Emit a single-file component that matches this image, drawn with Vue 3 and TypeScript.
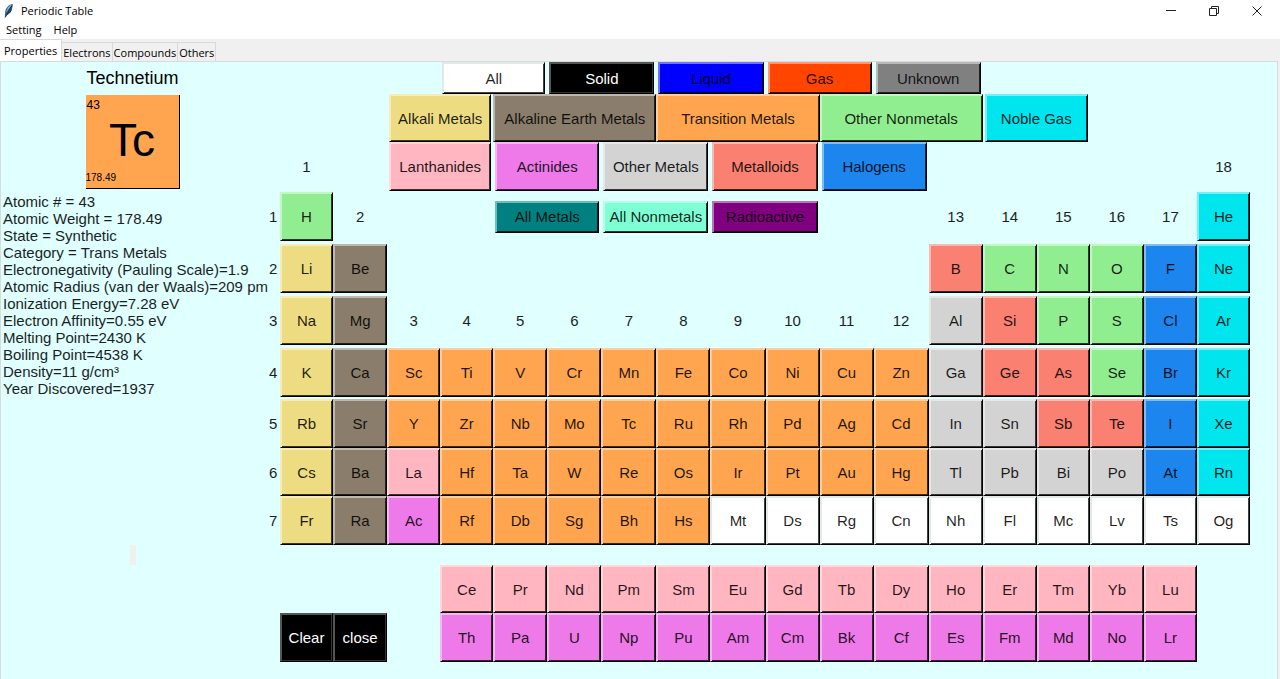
<script setup lang="ts">
import { ref } from 'vue'

interface Cell {
  text: string
  kind: string
  row: number
  col: number
  span: number
}

interface Label {
  text: string
  row: number
  col: number
}

const tabs = ['Properties', 'Electrons', 'Compounds', 'Others']
const activeTab = ref('Properties')

const facts = [
  'Atomic # = 43',
  'Atomic Weight = 178.49',
  'State = Synthetic',
  'Category = Trans Metals',
  'Electronegativity (Pauling Scale)=1.9',
  'Atomic Radius (van der Waals)=209 pm',
  'Ionization Energy=7.28 eV',
  'Electron Affinity=0.55 eV',
  'Melting Point=2430 K',
  'Boiling Point=4538 K',
  'Density=11 g/cm³',
  'Year Discovered=1937',
]

const filter = (text: string, kind: string, row: number, col: number, span = 2): Cell => ({
  text,
  kind,
  row,
  col,
  span,
})

const filters: Cell[] = [
  filter('All', 'white', 1, 4),
  filter('Solid', 'black', 1, 6),
  filter('Liquid', 'liquid', 1, 8),
  filter('Gas', 'gas', 1, 10),
  filter('Unknown', 'unknown', 1, 12),
  filter('Alkali Metals', 'alkali', 2, 3),
  filter('Alkaline Earth Metals', 'earth', 2, 5, 3),
  filter('Transition Metals', 'trans', 2, 8, 3),
  filter('Other Nonmetals', 'nonmetal', 2, 11, 3),
  filter('Noble Gas', 'noble', 2, 14),
  filter('Lanthanides', 'lanth', 3, 3),
  filter('Actinides', 'act', 3, 5),
  filter('Other Metals', 'metal', 3, 7),
  filter('Metalloids', 'metalloid', 3, 9),
  filter('Halogens', 'halogen', 3, 11),
  filter('All Metals', 'teal', 4, 5),
  filter('All Nonmetals', 'aqua', 4, 7),
  filter('Radioactive', 'purple', 4, 9),
]

// Each run: grid row, first column, category, symbols from left to right.
const runs: [number, number, string, string][] = [
  [4, 1, 'nonmetal', 'H'],
  [4, 18, 'noble', 'He'],
  [5, 1, 'alkali', 'Li'],
  [5, 2, 'earth', 'Be'],
  [5, 13, 'metalloid', 'B'],
  [5, 14, 'nonmetal', 'C N O'],
  [5, 17, 'halogen', 'F'],
  [5, 18, 'noble', 'Ne'],
  [6, 1, 'alkali', 'Na'],
  [6, 2, 'earth', 'Mg'],
  [6, 13, 'metal', 'Al'],
  [6, 14, 'metalloid', 'Si'],
  [6, 15, 'nonmetal', 'P S'],
  [6, 17, 'halogen', 'Cl'],
  [6, 18, 'noble', 'Ar'],
  [7, 1, 'alkali', 'K'],
  [7, 2, 'earth', 'Ca'],
  [7, 3, 'trans', 'Sc Ti V Cr Mn Fe Co Ni Cu Zn'],
  [7, 13, 'metal', 'Ga'],
  [7, 14, 'metalloid', 'Ge As'],
  [7, 16, 'nonmetal', 'Se'],
  [7, 17, 'halogen', 'Br'],
  [7, 18, 'noble', 'Kr'],
  [8, 1, 'alkali', 'Rb'],
  [8, 2, 'earth', 'Sr'],
  [8, 3, 'trans', 'Y Zr Nb Mo Tc Ru Rh Pd Ag Cd'],
  [8, 13, 'metal', 'In Sn'],
  [8, 15, 'metalloid', 'Sb Te'],
  [8, 17, 'halogen', 'I'],
  [8, 18, 'noble', 'Xe'],
  [9, 1, 'alkali', 'Cs'],
  [9, 2, 'earth', 'Ba'],
  [9, 3, 'lanth', 'La'],
  [9, 4, 'trans', 'Hf Ta W Re Os Ir Pt Au Hg'],
  [9, 13, 'metal', 'Tl Pb Bi Po'],
  [9, 17, 'halogen', 'At'],
  [9, 18, 'noble', 'Rn'],
  [10, 1, 'alkali', 'Fr'],
  [10, 2, 'earth', 'Ra'],
  [10, 3, 'act', 'Ac'],
  [10, 4, 'trans', 'Rf Db Sg Bh Hs'],
  [10, 9, 'white', 'Mt Ds Rg Cn Nh Fl Mc Lv Ts Og'],
  [12, 4, 'lanth', 'Ce Pr Nd Pm Sm Eu Gd Tb Dy Ho Er Tm Yb Lu'],
  [13, 1, 'black', 'Clear close'],
  [13, 4, 'act', 'Th Pa U Np Pu Am Cm Bk Cf Es Fm Md No Lr'],
]

const cells: Cell[] = runs.flatMap(([row, first, kind, symbols]) =>
  symbols.split(' ').map((text, i) => ({ text, kind, row, col: first + i, span: 1 })),
)

const groupRow = (n: number): number => {
  if (n === 1 || n === 18) return 3
  return n === 2 || n > 12 ? 4 : 6
}

const groups: Label[] = Array.from({ length: 18 }, (_, i) => ({
  text: String(i + 1),
  row: groupRow(i + 1),
  col: i + 1,
}))

const periods = [1, 2, 3, 4, 5, 6, 7]

// The first grid column holds the period numbers, so groups start at line 2.
const place = (c: { row: number; col: number; span?: number }) => ({
  gridRow: c.row,
  gridColumn: `${c.col + 1} / span ${c.span ?? 1}`,
})
</script>

<template>
  <div class="window">
    <header class="titlebar">
      <svg class="feather" viewBox="0 0 12 16" aria-hidden="true">
        <path d="M9.800 1C6 1.200 2.400 5 2.200 9.600L1.800 14.800L3.200 12.400C7 11.600 9.800 6.600 9.800 1Z" fill="#2d5d86" />
        <path d="M9.400 1.200C6.400 2 3.800 5.500 3 9.800L5.400 6.600Z" fill="#8fb9d8" />
        <path d="M8.800 2.600L2.200 14.500M6.500 10L8.600 6.500" stroke="#14283a" stroke-width="0.9" fill="none" />
      </svg>
      <span class="caption">Periodic Table</span>
      <div class="controls">
        <button type="button" aria-label="Minimize">
          <svg viewBox="0 0 12 12"><path d="M1 5.500H11" /></svg>
        </button>
        <button type="button" aria-label="Restore">
          <svg viewBox="0 0 12 12"><path d="M1.500 3.500H8.500V10.500H1.500ZM3.500 3.500V1.500H10.500V8.500H8.500" /></svg>
        </button>
        <button type="button" aria-label="Close">
          <svg viewBox="0 0 12 12"><path d="M1.500 1.500L10.500 10.500M10.500 1.500L1.500 10.500" /></svg>
        </button>
      </div>
    </header>

    <nav class="menubar">
      <button type="button">Setting</button>
      <button type="button">Help</button>
    </nav>

    <div class="tabs" role="tablist">
      <button
        v-for="tab in tabs"
        :key="tab"
        type="button"
        role="tab"
        class="tab"
        :class="{ active: tab === activeTab }"
        :aria-selected="tab === activeTab"
        @click="activeTab = tab"
      >
        {{ tab }}
      </button>
    </div>

    <main class="panel">
      <aside class="details">
        <h1>Technetium</h1>
        <div class="card">
          <span class="number">43</span>
          <span class="symbol">Tc</span>
          <span class="weight">178.49</span>
        </div>
        <ul class="facts">
          <li v-for="fact in facts" :key="fact">{{ fact }}</li>
        </ul>
        <div class="marker"></div>
      </aside>

      <section class="table">
        <span v-for="p in periods" :key="'p' + p" class="period" :style="{ gridRow: p + 3 }">{{ p }}</span>
        <span v-for="g in groups" :key="'g' + g.text" class="group" :style="place(g)">{{ g.text }}</span>
        <button
          v-for="f in filters"
          :key="f.text"
          type="button"
          class="key wide"
          :class="[f.kind, { short: f.row === 4, triple: f.span === 3 }]"
          :style="place(f)"
        >
          {{ f.text }}
        </button>
        <button
          v-for="c in cells"
          :key="c.text"
          type="button"
          class="key"
          :class="c.kind"
          :style="place(c)"
        >
          {{ c.text }}
        </button>
      </section>
    </main>
  </div>
</template>

<style>
body {
  margin: 0;
  background: #f0f0f0;
}
</style>

<style scoped>
.window {
  display: flex;
  flex-direction: column;
  min-height: 100vh;
  background: #f0f0f0;
  color: #000;
  font-family: "Open Sans", "Noto Sans", sans-serif;
  font-size: 11px;
}

button {
  box-sizing: border-box;
  margin: 0;
  padding: 0;
  border: 0;
  background: none;
  color: inherit;
  font: inherit;
}

.titlebar {
  display: flex;
  align-items: center;
  height: 21px;
  padding-left: 3px;
  background: #fff;
}

.feather {
  width: 12px;
  height: 16px;
}

.caption {
  margin-left: 6px;
}

.controls {
  display: flex;
  margin-left: auto;
  padding-right: 2px;
}

.controls button {
  display: grid;
  place-items: center;
  width: 43px;
  height: 20px;
}

.controls svg {
  width: 12px;
  height: 12px;
  fill: none;
  stroke: #222;
}

.menubar {
  display: flex;
  gap: 12px;
  height: 18px;
  padding-left: 6px;
  background: #fff;
  line-height: 18px;
}

.tabs {
  display: flex;
  align-items: flex-end;
  height: 22px;
}

.tab {
  height: 19px;
  padding: 2px 1px 0;
  border: 1px solid #d9d9d9;
  border-width: 1px 1px 0 0;
  line-height: 16px;
}

.tab.active {
  height: 22px;
  padding: 0 4px;
  background: #fff;
}

.panel {
  display: flex;
  flex: 1;
  margin-right: 2px;
  padding-bottom: 16px;
  border: 1px solid #d5dcdc;
  border-bottom: 0;
  background: #e0ffff;
  font-family: "Liberation Sans", Arial, sans-serif;
  font-size: 15px;
}

.details {
  display: flex;
  flex-direction: column;
  align-items: center;
  flex: none;
  width: 263px;
}

h1 {
  margin: 5px 0 6px;
  font-size: 18px;
  font-weight: 400;
  line-height: 22px;
}

.card {
  display: flex;
  flex-direction: column;
  justify-content: space-between;
  box-sizing: border-box;
  width: 94px;
  height: 94px;
  padding-top: 3px;
  border-right: 1px solid #000;
  border-bottom: 1px solid #000;
  background: #ffa54f;
}

.number {
  padding-left: 1px;
  font-size: 12px;
  line-height: 14px;
}

.symbol {
  font-size: 46px;
  line-height: 52px;
  text-align: center;
}

.weight {
  font-size: 10px;
  line-height: 20px;
}

.facts {
  align-self: stretch;
  margin: 4px 0 0;
  padding: 0 0 0 2px;
  list-style: none;
  line-height: 17px;
  white-space: nowrap;
  color: #1a1f1f;
}

.marker {
  width: 6px;
  height: 20px;
  margin-top: 148px;
  background: #f0f0f0;
}

.table {
  display: grid;
  flex: 1;
  margin-right: 27px;
  grid-template-columns:
    16px 53fr 54fr 53fr 53fr 54fr 54fr 55fr 54fr 55fr 54fr 54fr 55fr 54fr 54fr 53fr 54fr 53fr 53fr;
  grid-template-rows: 32px 48px 49px 51px 53px 51px 53px 49px 48px 49px 20px 48px 49px;
  align-content: start;
  align-items: center;
}

.period {
  grid-column: 1;
  padding-left: 5px;
  color: #1a1f1f;
}

.group {
  text-align: center;
  color: #1a1f1f;
}

.key {
  --face: #fff;
  --light: color-mix(in srgb, var(--face), #fff 45%);
  --dark: color-mix(in srgb, var(--face), #000 75%);
  width: 100%;
  height: 100%;
  max-height: 49px;
  border: 1px solid #000;
  border-top-color: var(--light);
  border-left-color: var(--light);
  background: var(--face);
  box-shadow: inset 1px 1px var(--light), inset -1px -1px var(--dark);
  color: rgba(0, 0, 0, 0.88);
  white-space: nowrap;
}

.wide {
  width: calc(100% - 4px);
  justify-self: center;
}

.triple {
  width: 100%;
}

.short {
  height: 32px;
}

.white {
  --face: #fff;
  --light: #e3e9e9;
}
.black {
  --face: #000;
  --light: #555;
  --dark: #333;
  color: #fff;
}
.liquid { --face: #00f; }
.gas { --face: #ff4500; }
.unknown { --face: #808080; }
.alkali { --face: #eedc82; }
.earth { --face: #8b7d6b; }
.trans { --face: #ffa54f; }
.nonmetal { --face: #90ee90; }
.noble { --face: #00e5ee; }
.lanth { --face: #ffb6c1; }
.act { --face: #ee7ae9; }
.metal { --face: #d3d3d3; }
.metalloid { --face: #fa8072; }
.halogen { --face: #1c86ee; }
.teal { --face: #008080; }
.aqua { --face: #7fffd4; }
.purple { --face: #800080; }
</style>
